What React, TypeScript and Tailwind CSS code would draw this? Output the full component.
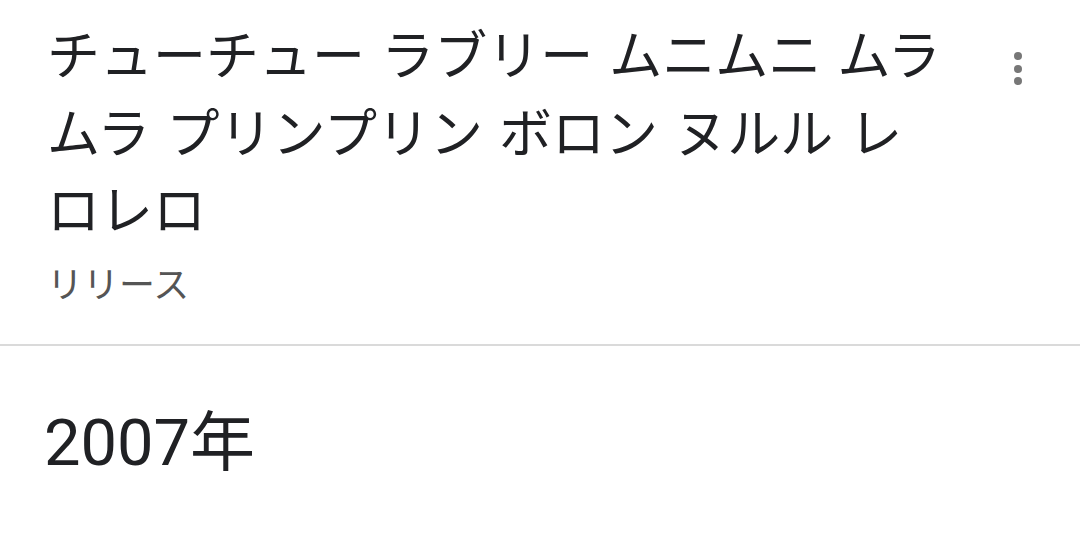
import React from "react";

export default function App() {
  return (
    <div className="w-[1080px] h-[546px] bg-white overflow-hidden" style={{ fontFamily: 'Roboto, "Noto Sans CJK JP", sans-serif' }}>
      <div className="flex h-[346px] border-b-2 border-[#dadada] pl-[47px] pr-[58px] pt-[19px]">
        <div className="w-[902px]">
          <div className="text-[53px] leading-[77.5px] text-[#202124] [word-spacing:3px]">
            チューチュー ラブリー ムニムニ ムラムラ プリンプリン ボロン ヌルル レロレロ
          </div>
          <div className="text-[36px] leading-[48px] text-[#555555] mt-[10px]">リリース</div>
        </div>
        <div className="flex-1"></div>
        <div className="flex flex-col items-center gap-[4.5px] pt-[33px] w-[8px]">
          <div className="w-[8px] h-[8px] rounded-full bg-[#777]"></div>
          <div className="w-[8px] h-[8px] rounded-full bg-[#777]"></div>
          <div className="w-[8px] h-[8px] rounded-full bg-[#777]"></div>
        </div>
      </div>
      <div className="pl-[44px] pt-[52px] text-[65px] leading-[90px] text-[#202124]">2007年</div>
    </div>
  );
}
